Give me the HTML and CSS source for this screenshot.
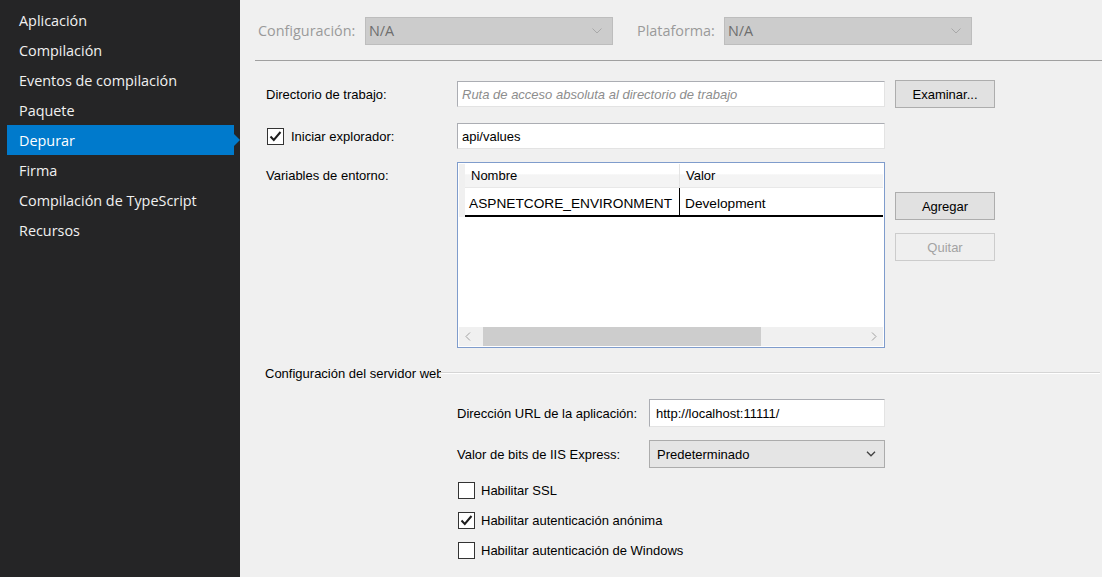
FILE: index.html
```html
<!DOCTYPE html>
<html lang="es">
<head>
<meta charset="utf-8">
<title>Depurar</title>
<link rel="stylesheet" href="styles.css">
</head>
<body>
<div class="app">
  <nav class="sidebar">
    <div class="nav-item">Aplicación</div>
    <div class="nav-item">Compilación</div>
    <div class="nav-item">Eventos de compilación</div>
    <div class="nav-item">Paquete</div>
    <div class="nav-item active">Depurar</div>
    <div class="nav-item">Firma</div>
    <div class="nav-item">Compilación de TypeScript</div>
    <div class="nav-item">Recursos</div>
  </nav>
  <main class="main">
    <div class="topbar">
      <span class="top-label">Configuración:</span>
      <div class="top-select"><span>N/A</span><svg class="chev-light" width="10" height="6" viewBox="0 0 10 6"><path d="M0.5 0.5 L5 5 L9.5 0.5" fill="none" stroke="#a8a8a8" stroke-width="1"/></svg></div>
      <span class="top-label plat">Plataforma:</span>
      <div class="top-select"><span>N/A</span><svg class="chev-light" width="10" height="6" viewBox="0 0 10 6"><path d="M0.5 0.5 L5 5 L9.5 0.5" fill="none" stroke="#a8a8a8" stroke-width="1"/></svg></div>
    </div>

    <div class="form">
      <div class="row row-dir">
        <div class="label">Directorio de trabajo:</div>
        <div class="input placeholder">Ruta de acceso absoluta al directorio de trabajo</div>
        <div class="button">Examinar...</div>
      </div>

      <div class="row row-browser">
        <div class="label check-label">
          <span class="checkbox"><svg width="15" height="15" viewBox="0 0 15 15"><path d="M2.5 7.5 L5.8 11 L12.5 3" fill="none" stroke="#1e1e1e" stroke-width="2"/></svg></span>
          <span>Iniciar explorador:</span>
        </div>
        <div class="input">api/values</div>
      </div>

      <div class="row row-env">
        <div class="label env-label">Variables de entorno:</div>
        <div class="grid">
          <div class="grid-body">
            <div class="grid-head">
              <div class="rowhdr"></div>
              <div class="cell c1">Nombre</div>
              <div class="cell c2">Valor</div>
            </div>
            <div class="grid-row">
              <div class="rowhdr"></div>
              <div class="cell c1">ASPNETCORE_ENVIRONMENT</div>
              <div class="cell c2">Development</div>
            </div>
          </div>
          <div class="hscroll">
            <div class="sb-btn"><svg width="6" height="9" viewBox="0 0 6 9"><path d="M5 0.5 L1 4.5 L5 8.5" fill="none" stroke="#a0a0a0" stroke-width="1"/></svg></div>
            <div class="sb-track"><div class="sb-thumb"></div></div>
            <div class="sb-btn"><svg width="6" height="9" viewBox="0 0 6 9"><path d="M1 0.5 L5 4.5 L1 8.5" fill="none" stroke="#a0a0a0" stroke-width="1"/></svg></div>
          </div>
        </div>
        <div class="btn-col">
          <div class="button">Agregar</div>
          <div class="button disabled">Quitar</div>
        </div>
      </div>

      <div class="section-head">
        <span class="section-title">Configuración del servidor web</span>
        <span class="section-line"></span>
      </div>

      <div class="sub">
        <div class="row row-url">
          <div class="label sub-label">Dirección URL de la aplicación:</div>
          <div class="input sub-input">http://localhost:11111/</div>
        </div>
        <div class="row row-bits">
          <div class="label sub-label">Valor de bits de IIS Express:</div>
          <div class="select">
            <span>Predeterminado</span>
            <svg width="10" height="6" viewBox="0 0 10 6"><path d="M1 0.8 L5 4.8 L9 0.8" fill="none" stroke="#404040" stroke-width="1.3"/></svg>
          </div>
        </div>
        <div class="check-row first"><span class="checkbox"></span><span>Habilitar SSL</span></div>
        <div class="check-row"><span class="checkbox"><svg width="15" height="15" viewBox="0 0 15 15"><path d="M2.5 7.5 L5.8 11 L12.5 3" fill="none" stroke="#1e1e1e" stroke-width="2"/></svg></span><span>Habilitar autenticación anónima</span></div>
        <div class="check-row"><span class="checkbox"></span><span>Habilitar autenticación de Windows</span></div>
      </div>
    </div>
  </main>
</div>
</body>
</html>
```

FILE: styles.css
```css
* { box-sizing: border-box; }
html, body { margin: 0; padding: 0; }
body {
  width: 1102px;
  height: 577px;
  overflow: hidden;
  background: #f0f0f0;
  font-family: "Liberation Sans", Arial, sans-serif;
  font-size: 13px;
  color: #000;
}
.app { display: flex; height: 577px; }

/* Sidebar */
.sidebar {
  width: 240px;
  flex: none;
  background: #252526;
  padding-top: 5px;
  font-family: "Open Sans", "Noto Sans", sans-serif;
  font-size: 14.4px;
  color: #f1f1f1;
}
.nav-item {
  position: relative;
  height: 30px;
  line-height: 31px;
  margin-left: 7px;
  margin-right: 6px;
  padding-left: 12px;
  white-space: nowrap;
}
.nav-item.active { background: #007acc; color: #fff; }
.nav-item.active::after {
  content: "";
  position: absolute;
  right: -6px;
  top: 9px;
  border-top: 6px solid transparent;
  border-bottom: 6px solid transparent;
  border-left: 6px solid #007acc;
}

/* Main */
.main { flex: 1; padding-left: 15px; min-width: 0; }
.topbar {
  height: 61px;
  border-bottom: 1px solid #a0a0a0;
  display: flex;
  align-items: center;
  padding-left: 3px;
  padding-top: 1px;
  font-family: "Open Sans", "Noto Sans", sans-serif;
  font-size: 14.4px;
}
.top-label { color: #9a9a9a; width: 107px; }
.top-label.plat { width: 87px; margin-left: 24px; }
.top-select {
  width: 248px;
  height: 28px;
  background: #cccccc;
  border: 1px solid #bdbdbd;
  display: flex;
  align-items: center;
  justify-content: space-between;
  padding: 0 10px 0 3px;
  color: #6e6e6e;
}
.top-select span { margin-top: -1px; }

/* Form */
.form { padding-left: 11px; }
.row { display: flex; align-items: center; }
.label { width: 191px; flex: none; white-space: nowrap; }
.input {
  width: 428px;
  height: 26px;
  background: #fff;
  border: 1px solid #abadb3;
  border-right-color: #e3e3e3;
  border-bottom-color: #e3e3e3;
  padding: 0 4px;
  display: flex;
  align-items: center;
  white-space: nowrap;
}
.input.placeholder { color: #8d8d8d; font-style: italic; }
.button {
  width: 100px;
  height: 28px;
  background: #e1e1e1;
  border: 1px solid #adadad;
  display: flex;
  align-items: center;
  justify-content: center;
}
.button.disabled { background: #efefef; border-color: #cccccc; color: #a3a3a3; }
.row-dir { margin-top: 19px; }
.row-dir .button { margin-left: 10px; }
.row-browser { margin-top: 15px; }
.check-label { display: flex; align-items: center; padding-left: 1px; }
.check-label .checkbox { margin-right: 7px; }
.checkbox {
  width: 17px;
  height: 17px;
  flex: none;
  background: #fff;
  border: 1px solid #333;
  display: inline-flex;
  align-items: center;
  justify-content: center;
}

/* Env grid */
.row-env { margin-top: 13px; align-items: flex-start; }
.env-label { padding-top: 6px; }
.grid {
  width: 428px;
  height: 186px;
  background: #fff;
  border: 1px solid #7f9ccc;
  padding: 1px;
  display: flex;
  flex-direction: column;
}
.grid-body { flex: 1; }
.grid-head, .grid-row { display: flex; }
.rowhdr { width: 6px; flex: none; background: #f0f0f0; }
.grid-head { height: 24px; }
.grid-head .cell {
  background: linear-gradient(#ffffff 0%, #ffffff 45%, #f4f4f4 46%, #f4f4f4 100%);
  border-bottom: 1px solid #e8e8e8;
  padding-left: 6px;
}
.grid-head .c1 { border-right: 1px solid #e4e4e4; }
.cell { display: flex; align-items: center; white-space: nowrap; overflow: hidden; }
.c1 { width: 215px; }
.c2 { flex: 1; padding-left: 5px; }
.grid-row { height: 29px; font-size: 13.7px; }
.grid-row .cell { border-bottom: 2px solid #000; padding-left: 4px; padding-top: 3px; }
.grid-row .c1 { border-right: 1px solid #000; }
.grid-row .c2 { padding-left: 5px; }
.hscroll { height: 19px; display: flex; background: #f0f0f0; }
.sb-btn { width: 18px; display: flex; align-items: center; justify-content: center; }
.sb-track { flex: 1; padding-left: 6px; padding-right: 104px; display: flex; }
.sb-thumb { flex: 1; background: #cdcdcd; }
.btn-col { display: flex; flex-direction: column; gap: 13px; margin-left: 10px; margin-top: 30px; }

/* Web server */
.section-head {
  display: flex;
  align-items: center;
  margin-top: 17px;
  margin-left: -1px;
  height: 16px;
}
.section-title { width: 176px; overflow: hidden; white-space: nowrap; flex: none; }
.section-line { flex: 1; height: 2px; border-top: 1px solid #d5d5d5; border-bottom: 1px solid #fff; margin-right: 2px; }
.sub { padding-left: 191px; }
.sub-label { width: 192px; }
.sub-input { width: 236px; height: 28px; padding-left: 6px; }
.row-url { margin-top: 18px; }
.row-bits { margin-top: 13px; }
.select {
  width: 236px;
  height: 28px;
  background: #e5e5e5;
  border: 1px solid #acacac;
  display: flex;
  align-items: center;
  justify-content: space-between;
  padding: 0 8px 0 7px;
}
.check-row { display: flex; align-items: center; height: 17px; margin-top: 13px; padding-left: 1px; }
.check-row.first { margin-top: 14px; }
.check-row .checkbox { margin-right: 6px; }
```
